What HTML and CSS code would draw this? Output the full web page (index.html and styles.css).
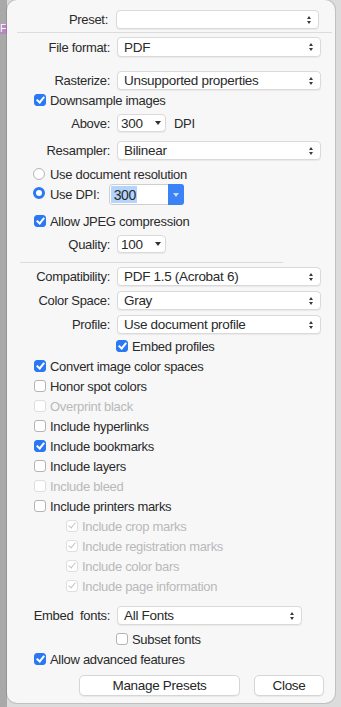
FILE: index.html
```html
<!DOCTYPE html>
<html lang="en">
  <head>
    <meta charset="UTF-8" >
    <title>Export Options</title>
    <link rel="stylesheet" href="styles.css">
  </head>
  <body>
    <div class="backdrop-mark">F</div>
    <div class="sheet">
      <div class="row r-preset">
        <span class="lbl lbl-preset">Preset:</span>
        <div class="select sel-preset"><span></span><i class="updown"></i></div>
      </div>
      <div class="rule rule-top"></div>

      <div class="row r-format">
        <span class="lbl">File format:</span>
        <div class="select"><span>PDF</span><i class="updown"></i></div>
      </div>
      <div class="row r-raster">
        <span class="lbl">Rasterize:</span>
        <div class="select"><span>Unsupported properties</span><i class="updown"></i></div>
      </div>
      <label class="check"><i class="box on"></i>Downsample images</label>
      <div class="row r-above">
        <span class="lbl">Above:</span>
        <div class="select small"><span>300</span><i class="down"></i></div>
        <span class="unit">DPI</span>
      </div>
      <div class="row r-resampler">
        <span class="lbl">Resampler:</span>
        <div class="select"><span>Bilinear</span><i class="updown"></i></div>
      </div>
      <label class="check r-docres"><i class="radio"></i>Use document resolution</label>
      <div class="check r-usedpi">
        <i class="radio on"></i>Use DPI:
        <div class="combo">
          <span class="combo-text"><span class="selected">300</span></span>
          <span class="combo-btn"><i class="down light"></i></span>
        </div>
      </div>
      <label class="check r-jpeg"><i class="box on"></i>Allow JPEG compression</label>
      <div class="row r-quality">
        <span class="lbl">Quality:</span>
        <div class="select small"><span>100</span><i class="down"></i></div>
      </div>
      <div class="rule rule-mid"></div>

      <div class="row r-compat">
        <span class="lbl">Compatibility:</span>
        <div class="select"><span>PDF 1.5 (Acrobat 6)</span><i class="updown"></i></div>
      </div>
      <div class="row r-space">
        <span class="lbl">Color Space:</span>
        <div class="select"><span>Gray</span><i class="updown"></i></div>
      </div>
      <div class="row r-space">
        <span class="lbl">Profile:</span>
        <div class="select"><span>Use document profile</span><i class="updown"></i></div>
      </div>
      <label class="check indent r-embedprof"><i class="box on"></i>Embed profiles</label>

      <label class="check r-convert"><i class="box on"></i>Convert image color spaces</label>
      <label class="check"><i class="box"></i>Honor spot colors</label>
      <label class="check off"><i class="box"></i>Overprint black</label>
      <label class="check"><i class="box"></i>Include hyperlinks</label>
      <label class="check"><i class="box on"></i>Include bookmarks</label>
      <label class="check"><i class="box"></i>Include layers</label>
      <label class="check off"><i class="box"></i>Include bleed</label>
      <label class="check"><i class="box"></i>Include printers marks</label>
      <label class="check sub off"><i class="box on"></i>Include crop marks</label>
      <label class="check sub off"><i class="box on"></i>Include registration marks</label>
      <label class="check sub off"><i class="box on"></i>Include color bars</label>
      <label class="check sub off"><i class="box on"></i>Include page information</label>

      <div class="row r-fonts">
        <span class="lbl">Embed&nbsp; fonts:</span>
        <div class="select sel-fonts"><span>All Fonts</span><i class="updown"></i></div>
      </div>
      <label class="check indent r-subset"><i class="box"></i>Subset fonts</label>
      <label class="check"><i class="box on"></i>Allow advanced features</label>

      <div class="buttons">
        <button type="button" class="btn btn-presets">Manage Presets</button>
        <button type="button" class="btn btn-close">Close</button>
      </div>
    </div>
  </body>
</html>
```

FILE: styles.css
```css
body {
  margin: 0;
  width: 341px;
  height: 707px;
  overflow: hidden;
  position: relative;
  font-family: "Liberation Sans", Arial, sans-serif;
  font-size: 13px;
  letter-spacing: -0.3px;
  color: #2a2a2a;
  background: linear-gradient(to right, #a9a9a9 0 7px, #dcdcdc 7px);
}

/* the purple tab peeking out behind the sheet */
.backdrop-mark {
  position: absolute;
  left: 0;
  top: 24px;
  width: 7px;
  height: 10px;
  background: #b58ac0;
  color: #fff;
  font-size: 10px;
  line-height: 10px;
  overflow: hidden;
}

.sheet {
  position: relative;
  margin-left: 7px;
  width: 328px;
  height: 703px;
  box-sizing: border-box;
  padding-top: 10px;
  background: #f7f7f7;
  border-radius: 10px;
  box-shadow: 0 0 0 1px rgba(0, 0, 0, 0.12);
}

.row {
  display: flex;
  align-items: center;
  height: 19px;
}

.lbl {
  width: 103px;
  text-align: right;
  margin-right: 7px;
  white-space: nowrap;
}

.lbl-preset {
  width: 101px;
  margin-right: 8px;
}

.select {
  display: flex;
  align-items: center;
  justify-content: space-between;
  width: 204px;
  height: 100%;
  box-sizing: border-box;
  padding: 0 7px 0 6px;
  background: #fff;
  border: 1px solid #dadada;
  border-radius: 4px;
  box-shadow: 0 1px 1px rgba(0, 0, 0, 0.06);
  font-size: 13.5px;
}

.sel-preset {
  width: 203px;
}

.sel-fonts {
  width: 185px;
}

.select.small {
  width: 49px;
  padding: 0 4px 0 3px;
}

/* stacked up/down triangles of a popup button */
.updown {
  display: flex;
  flex-direction: column;
  align-items: center;
  gap: 2px;
}

.updown::before,
.updown::after {
  content: "";
  width: 0;
  height: 0;
  border-left: 2.5px solid transparent;
  border-right: 2.5px solid transparent;
}

.updown::before {
  border-bottom: 3px solid #3a3a3a;
}

.updown::after {
  border-top: 3px solid #3a3a3a;
}

.down {
  width: 0;
  height: 0;
  border-left: 3px solid transparent;
  border-right: 3px solid transparent;
  border-top: 4px solid #333;
}

.down.light {
  border-top-color: #c9dcff;
}

.unit {
  margin-left: 8px;
}

.rule {
  height: 1px;
  background: #dcdcdc;
}

.rule-top {
  margin: 3px 3px 4px 10px;
}

.rule-mid {
  width: 263px;
  margin: 9px 0 4px 13px;
}

.r-format {
  height: 20px;
}

.r-raster {
  margin-top: 14px;
}

.check {
  display: flex;
  align-items: center;
  height: 20px;
  padding-left: 27px;
  white-space: nowrap;
}

.check.indent {
  padding-left: 109px;
}

.check.sub {
  padding-left: 59px;
}

.check.off {
  color: #b9b9b9;
}

.box {
  flex: none;
  position: relative;
  width: 12px;
  height: 12px;
  box-sizing: border-box;
  margin-right: 4px;
  background: #fff;
  border: 1px solid #b4b4b4;
  border-radius: 3px;
}

.check.off .box {
  border-color: #dedede;
}

.box.on {
  background: #2a78f4;
  border-color: #2a78f4;
}

.box.on::after {
  content: "";
  position: absolute;
  left: 3px;
  top: 0px;
  width: 3px;
  height: 6px;
  border: solid #fff;
  border-width: 0 2px 2px 0;
  transform: rotate(40deg);
}

.check.off .box.on {
  background: #fff;
  border-color: #dedede;
}

.check.off .box.on::after {
  border-color: #c4c4c4;
  border-width: 0 1.5px 1.5px 0;
}

.radio {
  flex: none;
  width: 12px;
  height: 12px;
  box-sizing: border-box;
  margin-right: 5px;
  background: #fff;
  border: 1px solid #b4b4b4;
  border-radius: 50%;
}

.radio.on {
  background: #fff;
  border: 3.5px solid #2a78f4;
}

.r-above {
  margin-top: 4px;
  height: 18px;
}

.r-resampler {
  margin-top: 9px;
}

.r-docres {
  margin-top: 4px;
  padding-left: 26px;
}

.r-usedpi {
  height: 21px;
  padding-left: 26px;
}

.r-usedpi .radio {
  margin-top: -4px;
}

.combo {
  display: flex;
  width: 75px;
  height: 21px;
  margin-left: 9px;
  box-sizing: border-box;
  background: #fff;
  border: 1px solid #cfcfcf;
  border-radius: 3px;
}

.combo-text {
  flex: 1;
  padding: 1px 0 1px 1px;
  display: flex;
}

.selected {
  display: flex;
  align-items: center;
  padding: 0 1px 0 3px;
  background: #b3d4fc;
  font-size: 14px;
}

.combo-btn {
  display: flex;
  align-items: center;
  justify-content: center;
  width: 16px;
  margin: -1px -1px -1px 0;
  background: #3b82f6;
  border-radius: 0 3px 3px 0;
}

.r-jpeg {
  margin-top: 6px;
}

.r-quality {
  margin-top: 4px;
  height: 18px;
}

.r-space {
  margin-top: 5px;
}

.r-embedprof {
  margin-top: 2px;
}

.r-convert {
  margin-top: 0;
}

.r-fonts {
  margin-top: 10px;
}

.r-subset {
  margin-top: 4px;
}

.buttons {
  display: flex;
  margin-top: 6px;
  padding-left: 72px;
  gap: 14px;
}

.btn {
  height: 21px;
  padding: 0;
  font-family: inherit;
  font-size: 13.5px;
  letter-spacing: -0.3px;
  color: #262626;
  background: #fff;
  border: 1px solid #d6d6d6;
  border-radius: 5px;
  box-shadow: 0 1px 1px rgba(0, 0, 0, 0.06);
}

.btn-presets {
  width: 161px;
}

.btn-close {
  width: 70px;
}
```
